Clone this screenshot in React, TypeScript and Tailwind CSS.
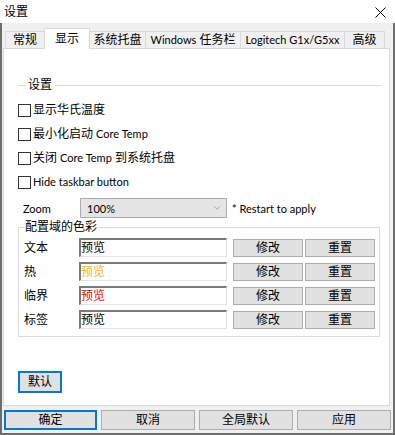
import type { ReactNode } from 'react'
import { ChevronDown } from 'lucide-react'

const font = { fontFamily: 'Lato, "Noto Sans CJK SC", sans-serif' }

// latin runs are drawn a bit smaller so they match the narrow system UI font
function L({ children }: { children: ReactNode }) {
  return <span className="text-[11px]">{children}</span>
}

const tabs: { key: string; label: ReactNode; w: string; active?: boolean }[] = [
  { key: 'general', label: '常规', w: 'w-[40px]' },
  { key: 'display', label: '显示', w: 'w-[46px]', active: true },
  { key: 'tray', label: '系统托盘', w: 'w-[56px]' },
  { key: 'taskbar', label: <><L>Windows</L> 任务栏</>, w: 'w-[95px]' },
  { key: 'logitech', label: <L>Logitech G1x/G5xx</L>, w: 'w-[104px]' },
  { key: 'advanced', label: '高级', w: 'w-[40px]' },
]

const colorRows = [
  { label: '文本', color: 'text-black' },
  { label: '热', color: 'text-[#f5b800]' },
  { label: '临界', color: 'text-[#ff0000]' },
  { label: '标签', color: 'text-black' },
]

export default function App() {
  return (
    <div className="w-[395px] h-[435px] flex flex-col text-[12px] text-black bg-white" style={font}>
      {/* title bar */}
      <div className="h-[23px] flex items-center justify-between pl-[4px] pr-[9px] bg-white">
        <span className="leading-none text-[12px]">设置</span>
        <svg width="11" height="11" viewBox="0 0 11 11" className="mt-[2px]">
          <path d="M0.5 0.5 L10.5 10.5 M10.5 0.5 L0.5 10.5" stroke="#000" strokeWidth="1" fill="none" />
        </svg>
      </div>

      {/* body */}
      <div className="flex-1 flex flex-col bg-[#f0f0f0] border-l-2 border-r-2 border-b-2 border-[#6d6d6d] pb-[3px]">
        {/* tab strip */}
        <div className="flex items-end h-[20px] mt-[5px] pl-[3px]">
          {tabs.map((t, i) =>
            t.active ? (
              <div
                key={t.key}
                className={`${t.w} h-[21px] -mb-[1px] -ml-[1px] relative z-10 bg-white border border-b-0 border-[#d9d9d9] flex items-center justify-center pb-[1px] leading-none`}
              >
                <span>{t.label}</span>
              </div>
            ) : (
              <div
                key={t.key}
                className={`${t.w} h-[17px] bg-[#f0f0f0] border-t border-r border-[#d9d9d9] ${i === 0 ? 'border-l' : ''} flex items-center justify-center leading-none whitespace-nowrap`}
              >
                <span>{t.label}</span>
              </div>
            )
          )}
        </div>

        {/* pane */}
        <div className="h-[358px] ml-[1px] mr-[3px] bg-white border border-[#d9d9d9] flex flex-col pl-[14px]">
          {/* group header 设置 */}
          <div className="mt-[30px] h-[12px] flex items-center mr-[8px]">
            <div className="w-[9px] h-px bg-[#dcdcdc]" />
            <span className="px-[1px] leading-none">设置</span>
            <div className="flex-1 h-px bg-[#dcdcdc] ml-[2px]" />
          </div>

          <div className="mt-[7px] flex flex-col">
            <CheckRow label="显示华氏温度" />
            <CheckRow label={<>最小化启动 <L>Core Temp</L></>} />
            <CheckRow label={<>关闭 <L>Core Temp</L> 到系统托盘</>} />
            <CheckRow label={<L>Hide taskbar button</L>} />
          </div>

          {/* zoom */}
          <div className="mt-[4px] h-[20px] flex items-center text-[11px]">
            <span className="w-[62px] pl-[5px] leading-none">Zoom</span>
            <div className="w-[147px] h-[20px] bg-[#e5e5e5] border border-[#adadad] flex items-center justify-between pl-[6px] pr-[4px]">
              <span className="leading-none">100%</span>
              <ChevronDown size={10} strokeWidth={1.2} color="#606060" />
            </div>
            <span className="ml-[5px] leading-none">* Restart to apply</span>
          </div>

          {/* color group */}
          <div className="relative mt-[9px] w-[362px] h-[110px] border border-[#dcdcdc] pl-[5px] pt-[10px] flex flex-col gap-[5px]">
            <span className="absolute -top-[7px] left-[5px] bg-white px-[1px] leading-none">配置域的色彩</span>
            {colorRows.map((r) => (
              <div key={r.label} className="h-[19px] flex items-center">
                <span className="w-[55px] leading-none">{r.label}</span>
                <div
                  className={`w-[148px] h-[19px] border-t-2 border-l-2 border-t-[#7a7a7a] border-l-[#7a7a7a] border-b border-r border-b-[#e3e3e3] border-r-[#e3e3e3] flex items-center leading-none ${r.color}`}
                >
                  预览
                </div>
                <div className="ml-[6px] flex gap-[2px]">
                  <Btn label="修改" w="w-[70px]" h="h-[18px]" />
                  <Btn label="重置" w="w-[70px]" h="h-[18px]" />
                </div>
              </div>
            ))}
          </div>

          {/* default */}
          <div className="mt-[34px]">
            <div className="w-[44px] h-[22px] bg-[#e1e1e1] border-2 border-[#0078d7] flex items-center justify-center leading-none">
              默认
            </div>
          </div>
        </div>

        {/* bottom buttons */}
        <div className="mt-[4px] flex gap-[4px] pl-[2px]">
          <div className="w-[93px] h-[20px] bg-[#e1e1e1] border-2 border-[#0078d7] flex items-center justify-center leading-none">
            确定
          </div>
          <Btn label="取消" w="w-[94px]" h="h-[20px]" />
          <Btn label="全局默认" w="w-[94px]" h="h-[20px]" />
          <Btn label="应用" w="w-[94px]" h="h-[20px]" />
        </div>
      </div>
    </div>
  )
}

function CheckRow({ label }: { label: ReactNode }) {
  return (
    <div className="h-[24px] flex items-center">
      <div className="w-[13px] h-[13px] border border-[#333333] bg-white" />
      <span className="ml-[2px] leading-none">{label}</span>
    </div>
  )
}

function Btn({ label, w, h }: { label: string; w: string; h: string }) {
  return (
    <div className={`${w} ${h} bg-[#e1e1e1] border border-[#adadad] flex items-center justify-center leading-none`}>
      {label}
    </div>
  )
}
